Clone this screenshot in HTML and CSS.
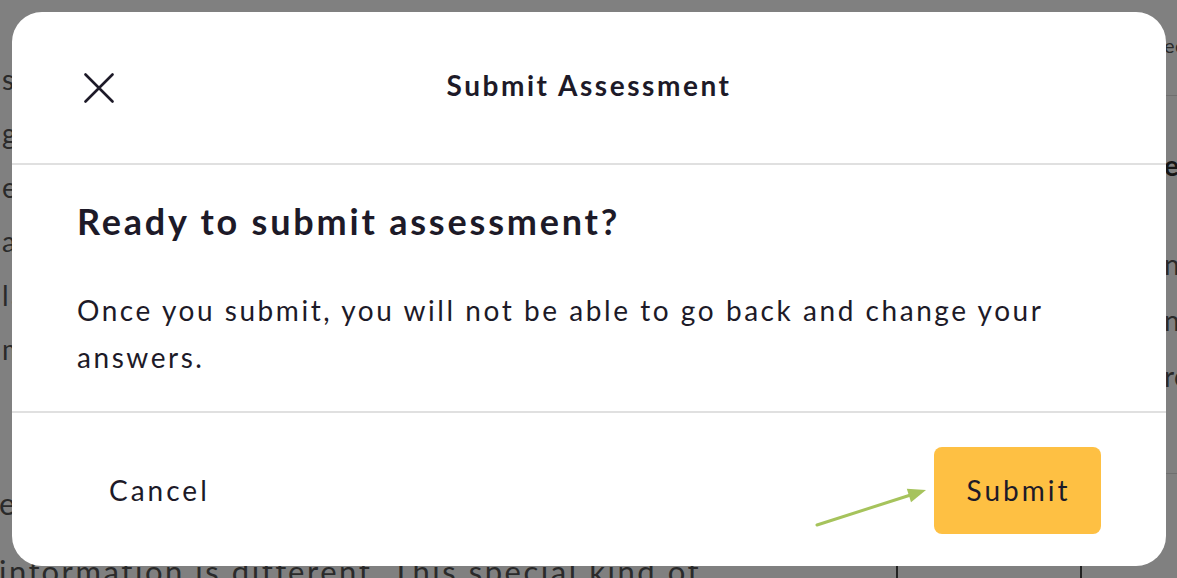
FILE: index.html
```html
<!DOCTYPE html>
<html lang="en">
<head>
    <meta charset="UTF-8">
    <meta name="viewport" content="width=device-width, initial-scale=1.0">
    <title>Submit Assessment</title>
    <link rel="stylesheet" href="styles.css">
</head>
<body>
    <!-- page behind the dialog (dimmed) -->
    <div class="page">
        <main class="article">
            <p class="article-text">
                so each group works on it<br>
                gets the same number of points<br>
                each one of the questions<br>
                and the total is counted<br>
                later in this section<br>
                might look different
            </p>
            <p class="article-text lower">
                every number has its place<br>
                information is different. This special kind of
            </p>
        </main>
        <aside class="sidebar">
            <div class="side-head">ection</div>
            <div class="side-title">ewrite</div>
            <p class="side-text">
                n<br>
                ny<br>
                re
            </p>
            <div class="side-table">
                <div class="side-cell"></div>
            </div>
        </aside>
    </div>

    <!-- dialog -->
    <div class="modal">
        <header class="modal-header">
            <button class="close-btn" type="button" aria-label="Close">
                <svg width="30" height="30" viewBox="0 0 30 30">
                    <path d="M1.5 1.5 L28.5 28.5 M28.5 1.5 L1.5 28.5" stroke="#1d1a28" stroke-width="2.6" stroke-linecap="round" fill="none"/>
                </svg>
            </button>
            <h2 class="modal-title">Submit Assessment</h2>
            <span></span>
        </header>

        <div class="modal-body">
            <h1 class="modal-heading">Ready to submit assessment?</h1>
            <p class="modal-text">Once you submit, you will not be able to go back and change your answers.</p>
        </div>

        <footer class="modal-footer">
            <button class="btn-cancel" type="button">Cancel</button>
            <button class="btn-submit" type="button">Submit</button>
        </footer>
    </div>

    <!-- annotation arrow pointing at the submit button -->
    <svg class="hint-arrow" width="125" height="55" viewBox="0 0 125 55">
        <line x1="7" y1="45" x2="99" y2="15.5" stroke="#a6c35c" stroke-width="3" stroke-linecap="round"/>
        <polygon points="116,10 101,22.2 96.8,8.8" fill="#a6c35c"/>
    </svg>
</body>
</html>
```

FILE: styles.css
```css
html, body {
    margin: 0;
    padding: 0;
    height: 100%;
    overflow: hidden;
}

body {
    font-family: Lato, "Open Sans", sans-serif;
    background-color: #808080;
    letter-spacing: 2.55px;
}

/* dimmed page */
.page {
    display: flex;
    height: 578px;
    color: #2a2a2a;
}

.article {
    width: 848px;
    flex-shrink: 0;
    padding-left: 2px;
    box-sizing: border-box;
}

.article-text {
    margin: 0;
    padding-top: 52px;
    font-size: 28px;
    line-height: 54px;
    white-space: nowrap;
}

.article-text.lower {
    padding-top: 93px;
    font-size: 31px;
    line-height: 68px;
    margin-left: -3px;
}

.sidebar {
    flex: 1;
    padding-left: 316px;
    font-size: 28px;
    letter-spacing: 0.5px;
    white-space: nowrap;
    display: flex;
    flex-direction: column;
    overflow: hidden;
}

.side-head {
    height: 96px;
    margin-left: -316px;
    padding-left: 316px;
    box-sizing: border-box;
    border-bottom: 1px solid #6f6f6f;
    font-size: 20px;
    line-height: 90px;
}

.side-title {
    font-weight: 700;
    color: #161616;
    margin-top: 50px;
    line-height: 38px;
}

.side-text {
    margin: 52px 0 0;
    line-height: 56px;
    padding-bottom: 69px;
    margin-left: -316px;
    padding-left: 316px;
    border-bottom: 1px solid #6f6f6f;
}

.side-table {
    flex: 1;
    margin-left: -268px;
    margin-top: 60px;
    width: 186px;
}

.side-cell {
    height: 100%;
    border-left: 2px solid #222;
    border-right: 2px solid #222;
}

/* dialog */
.modal {
    position: absolute;
    left: 12px;
    top: 12px;
    width: 1154px;
    height: 554px;
    background-color: #fff;
    border-radius: 30px;
    color: #1d1a28;
    display: flex;
    flex-direction: column;
    overflow: hidden;
}

.modal-header {
    height: 151px;
    flex-shrink: 0;
    display: grid;
    grid-template-columns: 1fr auto 1fr;
    align-items: center;
    padding: 0 72px;
    border-bottom: 2px solid #e0e0e0;
}

.close-btn {
    width: 30px;
    height: 30px;
    padding: 0;
    border: none;
    background: none;
    cursor: pointer;
    display: flex;
}

.modal-title {
    margin: 0;
    font-size: 28px;
    font-weight: 700;
    line-height: 36px;
    padding-bottom: 6px;
}

.modal-body {
    height: 248px;
    flex-shrink: 0;
    box-sizing: border-box;
    padding: 34px 65px 0;
    border-bottom: 2px solid #e0e0e0;
}

.modal-heading {
    margin: 0;
    font-size: 36px;
    font-weight: 700;
    line-height: 44px;
    letter-spacing: 2.8px;
}

.modal-text {
    margin: 44px 0 0;
    font-size: 28px;
    line-height: 47px;
    padding-right: 40px;
}

.modal-footer {
    flex: 1;
    display: flex;
    align-items: center;
    justify-content: space-between;
    padding: 0 65px;
}

.modal-footer button {
    font-family: inherit;
    letter-spacing: 3px;
    font-size: 28px;
    color: #1d1a28;
    border: none;
    cursor: pointer;
}

.btn-cancel {
    background: none;
    padding: 0 32px;
    height: 87px;
}

.btn-submit {
    width: 167px;
    height: 87px;
    background-color: #fec043;
    border-radius: 8px;
    padding: 0 0 0 2px;
    margin-top: 1px;
}

.hint-arrow {
    position: absolute;
    left: 810px;
    top: 480px;
}
```
